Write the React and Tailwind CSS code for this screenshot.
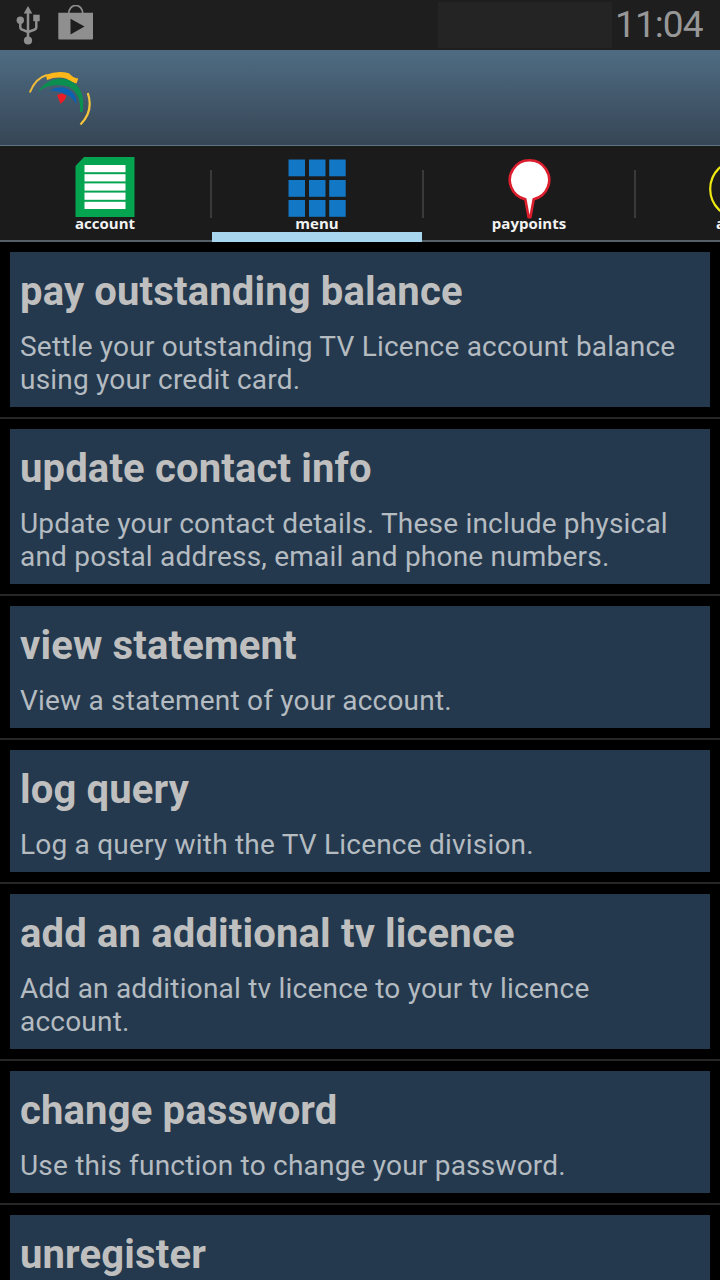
import React from 'react'

const items = [
  { title: 'pay outstanding balance', lines: ['Settle your outstanding TV Licence account balance', 'using your credit card.'] },
  { title: 'update contact info', lines: ['Update your contact details. These include physical', 'and postal address, email and phone numbers.'] },
  { title: 'view statement', lines: ['View a statement of your account.'] },
  { title: 'log query', lines: ['Log a query with the TV Licence division.'] },
  { title: 'add an additional tv licence', lines: ['Add an additional tv licence to your tv licence', 'account.'] },
  { title: 'change password', lines: ['Use this function to change your password.'] },
  { title: 'unregister', lines: [] },
]

function UsbIcon() {
  return (
    <svg width="24" height="40" viewBox="0 0 24 40" fill="none" stroke="#8f8f8f" strokeWidth="2.500">
      <path d="M12 8v25M4.300 17v5q0 2 2 2.700l5.700 2.300M20.300 15v7q0 2-2 2.700L12 27" />
      <g fill="#8f8f8f" stroke="none">
        <path d="M12 1l4.300 7.500H7.700z" />
        <circle cx="4.300" cy="15.200" r="3.700" />
        <path d="M17.200 9.700h6.500v6.500h-6.500z" />
        <circle cx="12" cy="35.500" r="4.100" />
      </g>
    </svg>
  )
}

function PlayStoreIcon() {
  return (
    <svg width="36" height="36" viewBox="0 0 36 36">
      <path d="M10.700 9C10.700 -2.300 24.800 -2.300 24.800 9" fill="none" stroke="#8f8f8f" strokeWidth="1.700" />
      <path d="M0.300 7.800h34.700V33.500q0 1-1 1H1.300q-1 0-1-1z" fill="#8f8f8f" />
      <path d="M12.500 13.800v15.700L26.500 21.600z" fill="#1e1e1e" />
    </svg>
  )
}

function Logo() {
  return (
    <svg width="68" height="60" viewBox="26 68 68 60" fill="none">
      <path d="M29.800 92.500C33 84.500 39 77 47 75" stroke="#f3bd3c" strokeWidth="2" />
      <path d="M45.800 74.800Q58 70 69 73.300Q73 78 78.300 78.500L76.500 83.500Q71 82 66 78.500Q57 76 47 80z" fill="#fdb71b" />
      <path d="M38 92Q46 79 61 78.500C76 79 86.500 92 82.500 112L80 112C81.500 98 75 86.500 63 85.500Q49 83 38 92z" fill="#0b8f50" />
      <path d="M49.500 90.500Q64 83 73 93Q77 98 76.500 104Q71 95.500 65.500 94Q58 90.500 49.500 90.500z" fill="#0b62b0" />
      <path d="M57 95l5-1.500 4.500 2-1.500 4-4.500 4.500q-1.500-4-3.500-9z" fill="#ee1c25" />
      <path d="M87.800 93C91.500 104 90 115 80.500 124.500" stroke="#f3c43c" strokeWidth="2.200" />
    </svg>
  )
}

function AccountIcon() {
  return (
    <svg width="60" height="60" viewBox="0 0 60 60">
      <path d="M9 0h50.500v60H0.500V9z" fill="#05a451" />
      {[8, 17.200, 26.400, 35.600, 44.800].map((y) => (
        <rect key={y} x="9.500" y={y} width="41" height="7.200" fill="#fff" />
      ))}
    </svg>
  )
}

function MenuIcon() {
  return (
    <svg width="60" height="60" viewBox="0 0 60 60" fill="#1277c4">
      {[2.500, 23, 43].map((y) =>
        [1.500, 22, 42.200].map((x) => <rect key={`${x}-${y}`} x={x} y={y} width="16.500" height="16.800" />)
      )}
    </svg>
  )
}

function PaypointsIcon() {
  return (
    <svg width="60" height="62" viewBox="0 0 60 62">
      <path
        d="M26.300 42.200A19.700 19.700 0 1 1 34.700 42.200L31.400 60.300h-1.800z"
        fill="#fff" stroke="#dc1f2e" strokeWidth="2.600" strokeLinejoin="round"
      />
    </svg>
  )
}

function AboutIcon() {
  return (
    <svg className="overflow-visible" width="60" height="60" viewBox="0 0 60 60">
      <circle cx="28" cy="32" r="28.800" fill="none" stroke="#efea12" strokeWidth="2.200" />
    </svg>
  )
}

const tabs = [
  { label: 'account', Icon: AccountIcon },
  { label: 'menu', Icon: MenuIcon, active: true },
  { label: 'paypoints', Icon: PaypointsIcon },
  { label: 'about', Icon: AboutIcon, labelClass: 'pr-1.5' },
]

function StatusBar() {
  return (
    <div className="flex h-[50px] shrink-0 bg-[#1e1e1e]">
      <div className="pl-4 pt-[5px]"><UsbIcon /></div>
      <div className="pl-[18px] pt-[5px]"><PlayStoreIcon /></div>
      <div className="ml-auto mt-0.5 h-[46px] w-[174px] bg-[#242424]" />
      <div className="w-[108px] pl-[3px] text-[37px] leading-[50px] tracking-[-0.9px] text-[#979797]">11:04</div>
    </div>
  )
}

function Tab({ label, Icon, active, labelClass = '' }) {
  return (
    <div className="flex w-[212px] shrink-0">
      <div className="relative flex w-[210px] flex-col items-center pt-[11px]">
        <div className="h-[58px]"><Icon /></div>
        <div className={`font-['Open_Sans','Noto_Sans',sans-serif] text-[15px] leading-4 font-bold text-[#f2f2f2] ${labelClass}`}>{label}</div>
        {active && <div className="absolute bottom-0 left-0 h-2.5 w-full bg-[#a8d6ee]" />}
      </div>
      <div className="mt-6 h-12 w-0.5 bg-[#3a3a3a]" />
    </div>
  )
}

function MenuItem({ title, lines }) {
  return (
    <div className="shrink-0 border-b-2 border-[#262626] p-2.5">
      <div className="bg-[#24394d] px-2.5 pt-4 pb-[11px]">
        <div className="mb-[15px] text-[40px] leading-[47px] font-bold tracking-[0.15px] whitespace-nowrap text-[#bfbfbf]">{title}</div>
        {lines.map((line) => (
          <div key={line} className="text-[28px] leading-[33px] tracking-[0.21px] whitespace-nowrap text-[#b4bbc1]">{line}</div>
        ))}
      </div>
    </div>
  )
}

export default function App() {
  return (
    <div className="flex h-[1280px] w-[720px] flex-col overflow-hidden bg-black font-[Roboto,sans-serif]">
      <StatusBar />
      <div className="h-24 shrink-0 border-b border-[#5d7482] bg-linear-to-b from-[#4f6c83] to-[#364656] pt-[18px] pl-[26px]">
        <Logo />
      </div>
      <div className="flex h-24 shrink-0 overflow-hidden bg-[#1b1b1b] bg-linear-to-t from-[#555f67] from-[2px] to-[#1b1b1b] to-[2px]">
        {tabs.map((tab) => <Tab key={tab.label} {...tab} />)}
      </div>
      {items.map((item) => <MenuItem key={item.title} {...item} />)}
    </div>
  )
}
